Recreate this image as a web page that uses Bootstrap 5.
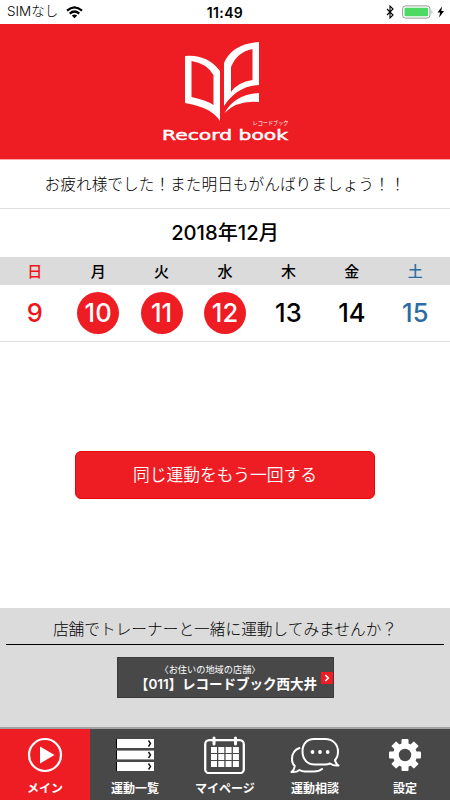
<!DOCTYPE html>
<html lang="ja">
<head>
<meta charset="utf-8">
<meta name="viewport" content="width=device-width, initial-scale=1">
<title>Record book</title>
<link href="https://cdn.jsdelivr.net/npm/bootstrap@5.3.0/dist/css/bootstrap.min.css" rel="stylesheet">
<style>
:root { --brand: #ee1c23; --panel: #dbdbdb; --bar: #484848; }
body { font-family: Inter, "Noto Sans CJK JP", sans-serif; color: #000; line-height: 1; width: 450px; height: 800px; overflow: hidden; }
svg { display: block; flex: none; }
.status-bar { height: 24px; font-size: 13px; }
.status-side { width: 150px; }
.carrier { font-weight: 300; margin-left: 7px; font-size: 13.5px; }
.clock { font-weight: 600; font-size: 14px; letter-spacing: .35px; padding-top: 1px; }
.brand-header { height: 135px; background: var(--brand); }
.message { height: 50px; padding-top: 2px; font-size: 15.7px; font-weight: 300; border-top: 1px solid #f7a9ab; border-bottom: 1px solid #dedede; }
.month { height: 48px; font-size: 20.2px; font-weight: 500; }
.cal-row { padding: 0 3px; }
.weekdays { height: 28px; background: var(--panel); font-size: 15px; font-weight: 500; }
.days { height: 57px; font-size: 25.5px; font-weight: 500; border-bottom: 1px solid #dedede; }
.sun { color: #f01418; }
.sat { color: #2d6ca2; }
.done { width: 42px; height: 42px; background: var(--brand); color: #fff; }
.again { --bs-btn-bg: var(--brand); --bs-btn-color: #fff; --bs-btn-border-color: #e8060c; --bs-btn-border-radius: 6px; width: 300px; height: 48px; font-size: 16.8px; font-weight: 350; line-height: 1; }
.store-panel { height: 121px; background: var(--panel); border-bottom: 2px solid #a2a2a2; padding: 0 6px; }
.invite { height: 37px; padding-top: 7px; font-size: 15.7px; font-weight: 300; border-bottom: 1px solid #000; }
.store { width: 217px; height: 41px; margin-top: 12px; background: var(--bar); color: #fff; border: 1px solid #3a3a3a; }
.store-text { width: 203px; padding-top: 1px; }
.store-area { font-size: 9.2px; margin-left: -18px; }
.store-name { font-size: 13.5px; font-weight: 700; margin-top: 4px; white-space: nowrap; margin-left: 14px; }
.store-number { font-weight: 600; letter-spacing: -.1px; }
.arrow-box { background: var(--brand); margin-top: 1px; }
.tabs { height: 71px; background: var(--bar); }
.tab { width: 90px; color: #fff; font-size: 12px; font-weight: 700; padding-top: 7px; text-decoration: none; }
.tab span { margin-top: 9px; }
.tab-on { background: var(--brand); }
</style>
<script src="https://cdn.jsdelivr.net/npm/bootstrap@5.3.0/dist/js/bootstrap.bundle.min.js"></script>
</head>
<body class="d-flex flex-column bg-white mx-auto">
<div class="status-bar d-flex align-items-center justify-content-between">
  <div class="status-side d-flex align-items-center">
    <span class="carrier">SIMなし</span>
    <svg class="ms-2" width="17" height="13" viewBox="0 0 17 13"><g fill="none" stroke="#000" stroke-width="2.2"><path d="M1 4.6Q8.5-2 16 4.6"/><path d="M3.7 7.6Q8.5 3.4 13.3 7.6"/></g><path d="M5.8 9.6Q8.5 7.4 11.2 9.6L8.5 12.3z"/></svg>
  </div>
  <span class="clock">11:49</span>
  <div class="status-side d-flex align-items-center justify-content-end pe-1">
    <svg width="61" height="14" viewBox="0 0 61 14"><path d="M2 4l6 6-3 3V1l3 3-6 6" fill="none" stroke="#000" stroke-width="1.1"/><rect x="17.6" y=".9" width="27.4" height="12.2" rx="3" fill="#fff" stroke="#999"/><rect x="19.5" y="2.7" width="23.6" height="8.6" rx="1" fill="#4cd964"/><path d="M46.6 5q1.800 2 0 4z" fill="#888"/><path d="M57 1.500l-4.500 6h2.600l-1 5 5-6.400h-2.800z"/></svg>
  </div>
</div>
<header class="brand-header d-flex justify-content-center">
  <svg width="150" height="135" viewBox="150 24 150 135">
    <g fill="#fff" fill-rule="evenodd">
      <path d="M185 56Q207 54 220 71V121Q211 107 185 103zM191.500 61V97Q206 100 213.500 105V75Q206 63 191.500 61z"/>
      <path d="M224 106V63Q232 44 259 42V85Q237 86 224 106zM231 92Q238 82 252.500 80V49Q237 52 231 67z"/>
      <path d="M224.500 113Q235 94 259 93V102Q237 100 224.500 113z"/>
    </g>
    <text x="252.500" y="125" fill="#fff" font-size="5.500" textLength="36" lengthAdjust="spacingAndGlyphs">レコードブック</text>
    <text x="162" y="139.500" fill="#fff" stroke="#fff" stroke-width=".5" font-family="DejaVu Sans" font-weight="400" font-size="14.800" textLength="126" lengthAdjust="spacingAndGlyphs">Record book</text>
  </svg>
</header>
<main class="d-flex flex-column flex-grow-1">
  <div class="message d-flex align-items-center justify-content-center">お疲れ様でした！また明日もがんばりましょう！！</div>
  <div class="month d-flex align-items-center justify-content-center">2018年12月</div>
  <div class="cal-row weekdays">
    <div class="row g-0 h-100 align-items-center text-center">
      <div class="col sun">日</div><div class="col">月</div><div class="col">火</div><div class="col">水</div><div class="col">木</div><div class="col">金</div><div class="col sat">土</div>
    </div>
  </div>
  <div class="cal-row days">
    <div class="row g-0 h-100 align-items-center text-center">
      <div class="col sun">9</div>
      <div class="col"><div class="done rounded-circle d-flex align-items-center justify-content-center mx-auto">10</div></div>
      <div class="col"><div class="done rounded-circle d-flex align-items-center justify-content-center mx-auto">11</div></div>
      <div class="col"><div class="done rounded-circle d-flex align-items-center justify-content-center mx-auto">12</div></div>
      <div class="col">13</div><div class="col">14</div><div class="col sat">15</div>
    </div>
  </div>
  <div class="flex-grow-1 d-flex align-items-center justify-content-center">
    <button type="button" class="btn again p-0">同じ運動をもう一回する</button>
  </div>
</main>
<section class="store-panel">
  <div class="invite d-flex align-items-center justify-content-center">店舗でトレーナーと一緒に運動してみませんか？</div>
  <div class="store d-flex align-items-center mx-auto">
    <div class="store-text text-center">
      <div class="store-area">〈お住いの地域の店舗〉</div>
      <div class="store-name"><span class="store-number">【011】</span>レコードブック西大井</div>
    </div>
    <div class="arrow-box"><svg width="12" height="12" viewBox="0 0 12 12"><path d="M4.300 3L7.300 6 4.300 9" fill="none" stroke="#fff" stroke-width="1.700"/></svg></div>
  </div>
</section>
<nav class="tabs d-flex">
  <a class="tab tab-on d-flex flex-column align-items-center"><svg width="36" height="38" viewBox="0 0 36 38"><circle cx="18" cy="19" r="16" fill="none" stroke="#fff" stroke-width="2.200"/><path d="M13 10.500V27.500L27.500 19z" fill="#fff"/></svg><span>メイン</span></a>
  <a class="tab d-flex flex-column align-items-center"><svg width="40" height="38" viewBox="0 0 40 38"><g fill="#000"><path d="M1 3h37v9H1zM1 14.500h37v9H1zM1 26h37v9H1z"/></g><g fill="#fff"><path d="M2 3h37v9H2zM2 14.500h37v9H2zM2 26h37v9H2z"/></g><path d="M33.500 4.500l2 3-2 3M33.500 16l2 3-2 3M33.500 27.500l2 3-2 3" fill="none" stroke="#111" stroke-width="1.400"/></svg><span>運動一覧</span></a>
  <a class="tab d-flex flex-column align-items-center"><svg width="42" height="38" viewBox="0 0 42 38"><rect x="1.200" y="4.200" width="38.600" height="33" rx="4" fill="none" stroke="#fff" stroke-width="2.300"/><path d="M10 2v6M31.500 2v6" stroke="#fff" stroke-width="3" stroke-linecap="round"/><path d="M7 11h6v6H7zM14.300 11h6v6h-6zM21.600 11h6v6h-6zM28.900 11h6v6h-6zM7 18h6v6H7zM14.300 18h6v6h-6zM21.600 18h6v6h-6zM28.900 18h6v6h-6zM7 25h6v6H7zM14.300 25h6v6h-6zM21.600 25h6v6h-6zM28.900 25h6v6h-6z" fill="#fff"/></svg><span>マイページ</span></a>
  <a class="tab d-flex flex-column align-items-center"><svg width="50" height="38" viewBox="0 0 50 38"><g fill="none" stroke="#fff" stroke-width="2" stroke-linejoin="round" stroke-linecap="round"><path d="M24 3H35C43 3 48 8.500 48 15.500C48 19.500 47 22 45 24Q45.500 27.500 48.500 29.500Q43.500 30 40 27.500Q38 28.500 35 28.500H25C17 28.500 12.500 23 12.500 15.500C12.500 8 17 3 24 3z"/><path d="M9.500 12C4 14 2 18 2 23Q2 27.500 4.800 30Q4.500 33.500 1.500 36Q6.500 36.500 9.500 34Q12 35.500 15 35.500H24Q29 35.500 32 33"/></g><g fill="#fff"><circle cx="22.500" cy="16" r="1.900"/><circle cx="30" cy="16" r="1.900"/><circle cx="37.700" cy="16" r="1.900"/></g></svg><span>運動相談</span></a>
  <a class="tab d-flex flex-column align-items-center"><svg width="34" height="38" viewBox="-17 -19 34 38"><g fill="#fff"><g id="teeth"><rect x="-3.500" y="-16" width="7" height="32" rx="1"/><rect x="-16" y="-3.500" width="32" height="7" rx="1"/></g><use href="#teeth" transform="rotate(45)"/><circle r="12"/></g><circle r="6.200" fill="#484848"/></svg><span>設定</span></a>
</nav>
</body>
</html>
